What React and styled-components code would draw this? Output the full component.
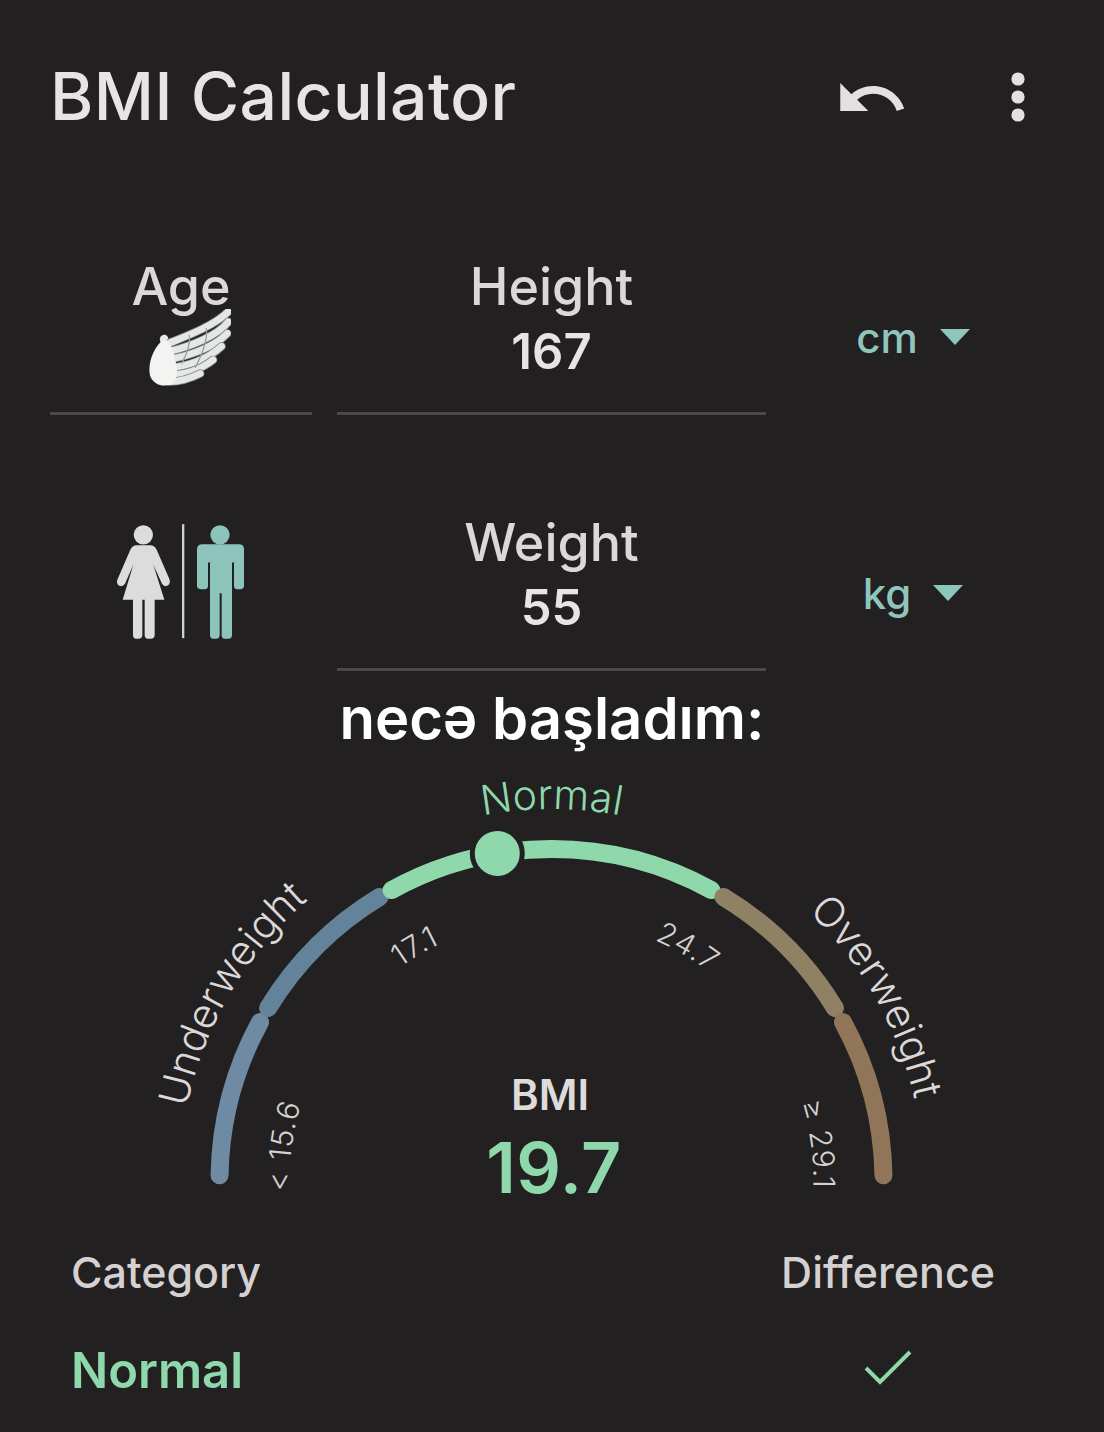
import React from "react";
import styled, { createGlobalStyle } from "styled-components";

const BG = "#222021";
const CX = 551.5;
const CY = 1182;
const R = 332;
const LABEL_R = 372;
const TICK_R = 262;

const polar = (deg, r) => {
  const a = (deg * Math.PI) / 180;
  return [CX - r * Math.cos(a), CY - r * Math.sin(a)];
};

const arc = (from, to, r) => {
  const [x1, y1] = polar(from, r);
  const [x2, y2] = polar(to, r);
  const large = to - from > 180 ? 1 : 0;
  return `M${x1} ${y1} A${r} ${r} 0 ${large} 1 ${x2} ${y2}`;
};

const SEGMENTS = [
  { from: 1, to: 28.6, color: "#6f8aa3" },
  { from: 31.4, to: 58.8, color: "#628399" },
  { from: 61.2, to: 118.8, color: "#8fd8ab" },
  { from: 121.2, to: 148.6, color: "#8f8264" },
  { from: 151.4, to: 179, color: "#917559" },
];

const FEATHERS = [
  "M60 100C110 80 190 50 233 8",
  "M60 125C120 110 200 80 233 38",
  "M50 150C110 140 190 115 230 72",
  "M50 175C110 170 170 150 213 110",
  "M50 195C100 195 150 180 188 150",
  "M60 214C90 214 120 205 150 190",
];

const App = () => {
  const [thumbX, thumbY] = polar(80.6, R);

  return (
    <>
      <GlobalStyle />
      <Screen>
        <Header>
          <Title>BMI Calculator</Title>
          <Actions>
            <svg width="75" height="75" viewBox="0 0 24 24" fill="#e4dfe0">
              <path d="M12.5 8c-2.65 0-5.05.99-6.9 2.6L2 7v9h9l-3.62-3.62c1.39-1.16 3.16-1.88 5.12-1.88 3.54 0 6.55 2.31 7.6 5.5l2.37-.78C21.08 11.03 17.15 8 12.5 8z" />
            </svg>
            <svg width="14" height="50" viewBox="0 0 14 50" fill="#e4dfe0">
              <circle cx="7" cy="7" r="6.6" />
              <circle cx="7" cy="25" r="6.6" />
              <circle cx="7" cy="43" r="6.6" />
            </svg>
          </Actions>
        </Header>

        <Form>
          <Field>
            <FieldLabel>Age</FieldLabel>
            <WingIcon />
          </Field>
          <Field>
            <FieldLabel>Height</FieldLabel>
            <FieldValue>167</FieldValue>
          </Field>
          <Unit>
            cm <Caret />
          </Unit>

          <Gender>
            <GenderIcon />
          </Gender>
          <Field>
            <FieldLabel>Weight</FieldLabel>
            <FieldValue>55</FieldValue>
          </Field>
          <Unit>
            kg <Caret />
          </Unit>
        </Form>

        <Caption>necə başladım:</Caption>

        <GaugeWrap>
          <svg width="1104" height="440" viewBox="0 770 1104 440">
            <defs>
              <path id="label-arc" d={arc(0, 180, LABEL_R)} />
              <path id="tick-arc" d={arc(-15, 195, TICK_R)} />
            </defs>

            {SEGMENTS.map((s) => (
              <path
                key={s.from}
                d={arc(s.from, s.to, R)}
                fill="none"
                stroke={s.color}
                strokeWidth="18"
                strokeLinecap="round"
              />
            ))}
            <circle
              cx={thumbX}
              cy={thumbY}
              r="25"
              fill="#8fd8ab"
              stroke={BG}
              strokeWidth="5"
            />

            <GaugeLabel>
              <textPath href="#label-arc" startOffset="16.8%">
                Underweight
              </textPath>
            </GaugeLabel>
            <GaugeLabel $color="#8fd8ab">
              <textPath href="#label-arc" startOffset="50%">
                Normal
              </textPath>
            </GaugeLabel>
            <GaugeLabel>
              <textPath href="#label-arc" startOffset="83.6%">
                Overweight
              </textPath>
            </GaugeLabel>

            <TickLabel>
              <textPath href="#tick-arc" startOffset="10.7%">
                {"< 15.6"}
              </textPath>
            </TickLabel>
            <TickLabel>
              <textPath href="#tick-arc" startOffset="35.6%">
                17.1
              </textPath>
            </TickLabel>
            <TickLabel>
              <textPath href="#tick-arc" startOffset="64.4%">
                24.7
              </textPath>
            </TickLabel>
            <TickLabel>
              <textPath href="#tick-arc" startOffset="89.1%">
                ≥ 29.1
              </textPath>
            </TickLabel>
          </svg>

          <Readout>
            <ReadoutLabel>BMI</ReadoutLabel>
            <ReadoutValue>19.7</ReadoutValue>
          </Readout>
        </GaugeWrap>

        <Summary>
          <SummaryColumn>
            <SummaryLabel>Category</SummaryLabel>
            <CategoryValue>Normal</CategoryValue>
          </SummaryColumn>
          <SummaryColumn $center>
            <SummaryLabel>Difference</SummaryLabel>
            <CheckIcon />
          </SummaryColumn>
        </Summary>
      </Screen>
    </>
  );
};

export default App;

const WingIcon = () => (
  <WingSvg width="82" height="78" viewBox="0 0 240 230">
    <path d="M36 100C26 92 32 76 44 76C52 76 58 84 56 94Z" fill="#e6e8e7" />
    <g fill="none" strokeLinecap="round">
      {FEATHERS.map((d) => (
        <React.Fragment key={d}>
          <path d={d} stroke="#7f8584" strokeWidth="25" />
          <path d={d} stroke="#e4e7e6" strokeWidth="20" />
        </React.Fragment>
      ))}
    </g>
    <g fill="none" stroke="#9ba09f" strokeWidth="4" strokeLinecap="round">
      <path d="M118 78C122 105 112 130 96 160" />
      <path d="M168 58C172 85 160 125 136 172" />
    </g>
    <path
      d="M44 88C14 110 -6 160 2 195C10 222 40 232 66 222C86 205 84 175 76 150C72 125 66 100 44 88Z"
      fill="#f3f3f2"
    />
  </WingSvg>
);

const GenderIcon = () => (
  <svg width="130" height="117" viewBox="50 40 390 350">
    <circle cx="132" cy="75" r="29" fill="#dcdcdc" />
    <path
      fill="#dcdcdc"
      d="M112 106H152Q167 106 172 120L211 210Q214 222 204 228Q194 232 188 222L162 165L195 270H166V375Q166 387 154 387H146Q136 387 136 375V270H129V375Q129 387 117 387H110Q101 387 101 375V270H70L102 165L77 222Q70 232 60 228Q50 222 54 210L93 120Q98 106 112 106Z"
    />
    <rect x="248" y="43" width="7" height="342" fill="#cfcfcf" />
    <circle cx="362" cy="75" r="29" fill="#8cc4bc" />
    <path
      fill="#8cc4bc"
      d="M310 103H419Q434 103 434 118V228Q434 238 424 238H412Q404 238 404 228V158H398V375Q398 387 388 387H376Q367 387 367 375V250H361V375Q361 387 351 387H341Q332 387 332 375V158H326V228Q326 238 318 238H304Q293 238 293 228V118Q293 103 310 103Z"
    />
  </svg>
);

const CheckIcon = () => (
  <CheckSvg width="48" height="36" viewBox="0 0 48 36">
    <path
      d="M2 19L16 33L46 3"
      fill="none"
      stroke="#8fd8ab"
      strokeWidth="4"
    />
  </CheckSvg>
);

const GlobalStyle = createGlobalStyle`
  html, body {
    margin: 0;
    padding: 0;
    background: ${BG};
  }
`;

const Screen = styled.div`
  width: 1104px;
  height: 1432px;
  overflow: hidden;
  background: ${BG};
  font-family: "Inter", "Noto Sans", sans-serif;
`;

const Header = styled.header`
  height: 255px;
  box-sizing: border-box;
  padding: 55px 79px 0 50px;
  display: flex;
  justify-content: space-between;
  align-items: flex-start;
`;

const Title = styled.h1`
  margin: 0;
  font-size: 66px;
  line-height: 82px;
  font-weight: 500;
  letter-spacing: 0.4px;
  color: #e8e3e4;
`;

const Actions = styled.div`
  display: flex;
  align-items: center;
  gap: 102px;
  margin-top: 6px;

  svg:last-child {
    margin-top: -3px;
  }
`;

const Form = styled.section`
  display: grid;
  grid-template-columns: 262px 429px 244px;
  grid-auto-rows: 160px;
  column-gap: 25px;
  row-gap: 96px;
  padding: 0 69px 0 50px;
`;

const Field = styled.div`
  display: flex;
  flex-direction: column;
  align-items: center;
  border-bottom: 3px solid #4a4849;
`;

const FieldLabel = styled.div`
  font-size: 52px;
  line-height: 64px;
  font-weight: 500;
  color: #dcd7d8;
`;

const FieldValue = styled.div`
  font-size: 49px;
  line-height: 66px;
  font-weight: 600;
  color: #e8e3e4;
`;

const WingSvg = styled.svg`
  margin: -10px 0 0 18px;
`;

const Unit = styled.div`
  display: flex;
  align-items: center;
  justify-content: center;
  gap: 22px;
  padding-top: 4px;
  font-size: 42px;
  font-weight: 500;
  color: #8fc6bc;
`;

const Caret = styled.span`
  width: 0;
  height: 0;
  border-left: 15px solid transparent;
  border-right: 15px solid transparent;
  border-top: 16px solid #8fc6bc;
`;

const Gender = styled.div`
  display: flex;
  justify-content: center;
  padding-top: 12px;
`;

const Caption = styled.div`
  height: 93px;
  font-size: 58px;
  line-height: 94px;
  font-weight: 600;
  text-align: center;
  color: #ffffff;
`;

const GaugeWrap = styled.section`
  position: relative;
  margin-top: 5px;
  height: 440px;

  svg {
    display: block;
  }
`;

const GaugeLabel = styled.text`
  font-size: 41px;
  font-weight: 300;
  text-anchor: middle;
  fill: ${(p) => p.$color || "#dcd7d8"};
`;

const TickLabel = styled.text`
  font-size: 30px;
  font-weight: 300;
  letter-spacing: 1px;
  text-anchor: middle;
  fill: #d5d0d1;
`;

const Readout = styled.div`
  position: absolute;
  left: 0;
  right: 0;
  top: 298px;
  display: flex;
  flex-direction: column;
  align-items: center;
`;

const ReadoutLabel = styled.div`
  margin-right: 4px;
  font-size: 42px;
  line-height: 56px;
  font-weight: 600;
  color: #dfdadb;
`;

const ReadoutValue = styled.div`
  margin-left: 4px;
  font-size: 70px;
  line-height: 90px;
  font-weight: 600;
  letter-spacing: 0.5px;
  color: #8fd8ab;
`;

const Summary = styled.section`
  display: flex;
  justify-content: space-between;
  padding: 35px 109px 0 71px;
`;

const SummaryColumn = styled.div`
  display: flex;
  flex-direction: column;
  align-items: ${(p) => (p.$center ? "center" : "flex-start")};
`;

const SummaryLabel = styled.div`
  font-size: 43px;
  line-height: 56px;
  font-weight: 500;
  color: #d5d0d1;
`;

const CategoryValue = styled.div`
  margin-top: 40px;
  font-size: 49px;
  line-height: 62px;
  font-weight: 600;
  color: #8fd8ab;
`;

const CheckSvg = styled.svg`
  margin-top: 49px;
`;
